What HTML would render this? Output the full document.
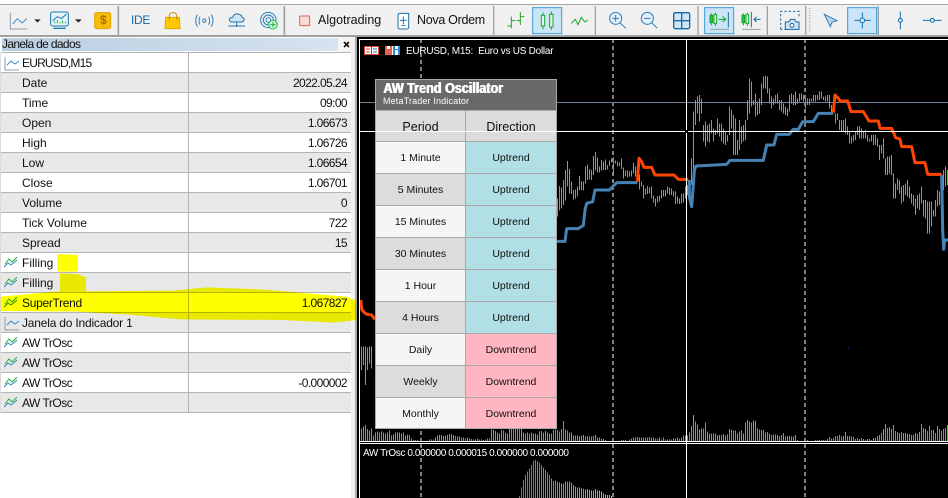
<!DOCTYPE html>
<html><head><meta charset="utf-8"><style>
html,body{margin:0;padding:0}
body{width:948px;height:498px;overflow:hidden;position:relative;background:#fff;font-family:"Liberation Sans",sans-serif;font-size:12px;color:#111}
.a{position:absolute;white-space:nowrap}
.r{position:absolute;left:1px;width:350px;height:19px;line-height:20px;border-bottom:1px solid #b4b4b4}
.r.w{background:#fff}.r.g{background:#e8e8e8}
.r b{font-weight:normal;position:absolute;left:21px;top:0}
.r i{font-style:normal;position:absolute;right:4px;top:0;letter-spacing:-.6px}
.r svg{position:absolute;left:3px;top:4px}
.c{position:absolute;box-sizing:border-box;border-right:1px solid #a9a9a9;border-bottom:1px solid #a9a9a9;text-align:center;font-size:10.5px;line-height:32px;height:32px;color:#111}
.p{left:376px;width:90px}.d{left:466px;width:91px}
.l{background:#f5f5f5}.k{background:#dcdcdc}.u{background:#b0e0e6}.n{background:#ffb6c1}
</style></head><body>

<!-- toolbar -->
<div class="a" style="left:0;top:4px;width:948px;height:1px;background:#a6a6a6"></div>
<div class="a" style="left:0;top:5px;width:948px;height:30px;background:#f0f0f0"></div>
<div class="a" style="left:0;top:35px;width:948px;height:2px;background:#a0a0a0"></div>
<div class="a" style="left:351px;top:37px;width:4px;height:461px;background:#f0f0f0"></div>
<div class="a" style="left:355px;top:37px;width:2px;height:461px;background:#a8a8a8"></div>
<div class="a" style="left:338px;top:37px;width:13px;height:15px;background:#f4f4f4"></div>
<svg class="a" style="left:0;top:0" width="948" height="36" viewBox="0 0 948 36">
<g transform="scale(.33333)" fill="none" stroke-width="3">
 <g stroke="#a0a0a0" stroke-width="5"><path d="M355 18V105M853 18V105"/></g>
 <path d="M31 38V87H82" stroke="#8c9bb0"/><path d="M38 72L52 56L66 69L81 56" stroke="#3a8ac4"/>
 <path d="M103 58H122L112 68Z M225 58H245L235 68Z" fill="#222" stroke="none"/>
 <rect x="152" y="36" width="53" height="42" rx="6" stroke="#1a78b4" fill="#e8f3fa"/>
 <path d="M158 62L172 50L184 56L200 42" stroke="#1a78b4"/>
 <path d="M164 70V64M172 70V60M180 70V66M188 70V62M196 70V66" stroke="#1fb83c"/>
 <path d="M160 85H197" stroke="#1a78b4" stroke-width="4"/>
 <rect x="284" y="38" width="48" height="48" rx="6" fill="#f7bc0a" stroke="#dfa200"/>
 <path d="M497 52H538L540 86H495Z" fill="#ffc800" stroke="#e0a800"/>
 <path d="M508 60V46Q510 38 519 38Q528 38 530 46V60" stroke="#c88e00"/>
 <g stroke="#2a7db8"><circle cx="613" cy="62" r="5"/><path d="M600 50Q594 62 600 74M626 50Q632 62 626 74M592 44Q582 62 592 80M634 44Q644 62 634 80"/></g>
 <path d="M692 66Q682 54 698 52Q702 40 714 42Q726 44 726 52Q738 56 728 66Z" fill="#cfe6f6" stroke="#1f76b0"/>
 <path d="M710 66V78M685 78H735" stroke="#1f76b0"/><circle cx="710" cy="78" r="3" fill="#1f76b0" stroke="none"/>
 <g stroke="#2a7db8"><circle cx="805" cy="60" r="23"/><circle cx="805" cy="60" r="15"/><circle cx="805" cy="60" r="7"/></g>
 <circle cx="819" cy="74" r="13" fill="#d8f8dc" stroke="#16c040"/><path d="M819 66V82M811 74H827" stroke="#16a838"/>
 <rect x="899" y="48" width="30" height="29" rx="2" fill="#fbd9d5" stroke="#d9635a"/>
 <path d="M1194 46Q1194 40 1200 40H1226V80Q1226 87 1220 87H1200Q1194 87 1194 80Z" fill="#fff" stroke="#1a6fa8"/>
 <path d="M1210 50V72M1200 61H1220M1204 76H1216" stroke="#1a6fa8"/>
</g>
<g transform="translate(474,0) scale(.33333)" fill="none" stroke-width="3">
 <g stroke="#a0a0a0" stroke-width="4"><path d="M59 18V105M364 18V105M672 18V105M880 18V105M995 18V105M1213 18V105"/></g>
 <path d="M1007 24V100" stroke="#b4b4b4" stroke-width="5" stroke-dasharray="3 4"/>
 <g stroke="#1aa82c"><path d="M112 50V85M100 78H112M112 62H124M139 36V75M128 62H139M139 50H151"/></g>
 <rect x="176" y="23" width="87" height="78" fill="#cce4f7" stroke="#3a9ad9"/>
 <g stroke="#12a828" fill="#e8f8ea"><path d="M207 38V88M232 34V90"/><rect x="202" y="46" width="10" height="32"/><rect x="227" y="43" width="10" height="38"/></g>
 <path d="M292 70L304 58L312 74L322 52L332 66L342 60" stroke="#18a82a"/>
 <g stroke="#2a7ab8"><circle cx="425" cy="55" r="18" fill="#e4f1fa"/><path d="M438 68L455 85M415 55H435M425 45V65"/>
 <circle cx="520" cy="55" r="18" fill="#e4f1fa"/><path d="M533 68L550 85M510 55H530"/></g>
 <rect x="599" y="38" width="48" height="48" rx="5" fill="#cfe6f7" stroke="#1668a8" stroke-width="4"/><path d="M623 38V86M599 62H647" stroke="#1668a8" stroke-width="4"/>
 <rect x="692" y="23" width="87" height="78" fill="#cce4f7" stroke="#3a9ad9"/>
 <g stroke="#12a828"><path d="M712 40V76M724 38V78"/><rect x="708" y="46" width="8" height="22" fill="#2cc040"/><rect x="720" y="44" width="8" height="26" fill="#e8f8ea"/><path d="M734 58H755M746 50L755 58L746 66"/></g>
 <path d="M763 36V82" stroke="#1a6fa8"/><path d="M708 88H765" stroke="#9aa0a8"/>
 <g stroke="#12a828"><path d="M808 40V76M820 38V78"/><rect x="804" y="46" width="8" height="22" fill="#2cc040"/><rect x="816" y="44" width="8" height="26" fill="#e8f8ea"/></g>
 <path d="M832 36V82M860 58H840M848 50L840 58L848 66" stroke="#1a6fa8"/><path d="M804 88H860" stroke="#9aa0a8"/>
 <path d="M920 88V34H975V52M938 88H920" stroke="#1668a8" stroke-dasharray="7 6"/>
 <path d="M934 66H944L950 58H962L966 66H975V88H934Z" fill="#cfe6f7" stroke="#1668a8"/><circle cx="954" cy="76" r="6" stroke="#1668a8" fill="#fff"/>
 <path d="M1051 43L1089 62L1074 67L1069 80Z" fill="#b8d8f0" stroke="#3a7cb0"/>
 <rect x="1121" y="23" width="87" height="78" fill="#cce4f7" stroke="#3a9ad9"/>
 <path d="M1141 61H1190M1165 37V85" stroke="#1a6fa8"/><circle cx="1165" cy="61" r="7" fill="#cce4f7" stroke="#1a6fa8"/>
 <path d="M1279 35V88" stroke="#1a6fa8"/><circle cx="1279" cy="61" r="6" fill="#cfe6f7" stroke="#1a6fa8"/>
 <path d="M1347 61H1403" stroke="#1a6fa8"/><circle cx="1375" cy="61" r="6" fill="#cfe6f7" stroke="#1a6fa8"/>
</g>
</svg>
<div class="a" style="left:131px;top:13px;color:#1668a8;font-size:12px;line-height:15px;letter-spacing:-.3px">IDE</div>
<div class="a" style="left:100px;top:13px;color:#a66e00;font-size:12px;font-weight:bold;line-height:15px">$</div>
<div class="a" style="left:318px;top:13px;font-size:12.5px;line-height:15px">Algotrading</div>
<div class="a" style="left:417px;top:13px;font-size:12.5px;line-height:15px;letter-spacing:-.3px">Nova Ordem</div>

<!-- left panel -->
<div class="a" style="left:2px;top:38px;width:336px;height:13px;background:linear-gradient(90deg,#b9cee0,#d6e3f0);line-height:13px;font-size:12px;letter-spacing:-.65px">Janela de dados</div>
<svg class="a" style="left:343px;top:41px" width="7" height="7"><path d="M1 1L6 6M6 1L1 6" stroke="#111" stroke-width="1.6"/></svg>
<div class="a" style="left:1px;top:52px;width:350px;height:1px;background:#b4b4b4"></div>

<div class="r w" style="top:53px"><svg width="16" height="14"><path d="M1 0V13H15" fill="none" stroke="#8c9bb0"/><path d="M3 8L7 4L11 7L15 4" fill="none" stroke="#3a8ac4"/></svg><b style="letter-spacing:-.8px">EURUSD,M15</b></div>
<div class="r g" style="top:73px"><b>Date</b><i>2022.05.24</i></div>
<div class="r w" style="top:93px"><b>Time</b><i>09:00</i></div>
<div class="r g" style="top:113px"><b>Open</b><i>1.06673</i></div>
<div class="r w" style="top:133px"><b>High</b><i>1.06726</i></div>
<div class="r g" style="top:153px"><b>Low</b><i>1.06654</i></div>
<div class="r w" style="top:173px"><b>Close</b><i>1.06701</i></div>
<div class="r g" style="top:193px"><b>Volume</b><i>0</i></div>
<div class="r w" style="top:213px"><b>Tick Volume</b><i>722</i></div>
<div class="r g" style="top:233px"><b>Spread</b><i>15</i></div>
<div class="r w" style="top:253px"><svg width="14" height="11"><path d="M0 10L4 6L7 8L13 3" fill="none" stroke="#2a8ab8"/><path d="M1 7L5 2L8 5L13 0" fill="none" stroke="#22b040"/></svg><b>Filling</b></div>
<div class="r g" style="top:273px"><svg width="14" height="11"><path d="M0 10L4 6L7 8L13 3" fill="none" stroke="#2a8ab8"/><path d="M1 7L5 2L8 5L13 0" fill="none" stroke="#22b040"/></svg><b>Filling</b></div>
<div class="r w" style="top:293px"><svg width="14" height="11"><path d="M0 10L4 6L7 8L13 3" fill="none" stroke="#2a8ab8"/><path d="M1 7L5 2L8 5L13 0" fill="none" stroke="#22b040"/></svg><b style="letter-spacing:-.3px">SuperTrend</b><i>1.067827</i></div>
<div class="r g" style="top:313px"><svg width="16" height="14"><path d="M1 0V13H15" fill="none" stroke="#8c9bb0"/><path d="M3 8L7 4L11 7L15 4" fill="none" stroke="#3a8ac4"/></svg><b style="letter-spacing:-.2px">Janela do Indicador 1</b></div>
<div class="r w" style="top:333px"><svg width="14" height="11"><path d="M0 10L4 6L7 8L13 3" fill="none" stroke="#2a8ab8"/><path d="M1 7L5 2L8 5L13 0" fill="none" stroke="#22b040"/></svg><b style="letter-spacing:-.5px">AW TrOsc</b></div>
<div class="r g" style="top:353px"><svg width="14" height="11"><path d="M0 10L4 6L7 8L13 3" fill="none" stroke="#2a8ab8"/><path d="M1 7L5 2L8 5L13 0" fill="none" stroke="#22b040"/></svg><b style="letter-spacing:-.5px">AW TrOsc</b></div>
<div class="r w" style="top:373px"><svg width="14" height="11"><path d="M0 10L4 6L7 8L13 3" fill="none" stroke="#2a8ab8"/><path d="M1 7L5 2L8 5L13 0" fill="none" stroke="#22b040"/></svg><b style="letter-spacing:-.5px">AW TrOsc</b><i>-0.000002</i></div>
<div class="r g" style="top:393px"><svg width="14" height="11"><path d="M0 10L4 6L7 8L13 3" fill="none" stroke="#2a8ab8"/><path d="M1 7L5 2L8 5L13 0" fill="none" stroke="#22b040"/></svg><b style="letter-spacing:-.5px">AW TrOsc</b></div>
<div class="a" style="left:188px;top:53px;width:1px;height:359px;background:#b4b4b4"></div>
<div class="a" style="left:0;top:53px;width:1px;height:360px;background:#dcdcdc"></div>

<!-- chart -->
<svg class="a" style="left:357px;top:37px;background:#000" width="591" height="461" viewBox="357 37 591 461">
 <path d="M421 39V441M613 39V441M805 39V441M421 444V498M613 444V498M805 444V498" stroke="#fff" fill="none" stroke-dasharray="4 3" shape-rendering="crispEdges"/>
 <path d="M360 102.5H948" stroke="#708090" shape-rendering="crispEdges"/>
 <g transform="translate(0,240) scale(.33333)" stroke="#2fdc1f" stroke-width="3" fill="none" shape-rendering="crispEdges">
  <path d="M1085 320V390M1091 320V375M1097 320V435M1103 322V390M1109 320V370M1115 320V385"/>
 </g>
 <g transform="translate(0,240) scale(.33333)" stroke="#ff4500" stroke-width="9" fill="none"><path d="M1082 180L1086 210L1098 222L1115 225L1125 238"/></g>
 <g transform="translate(550,130) scale(.33333)" stroke="#2fdc1f" stroke-width="3" fill="none" shape-rendering="crispEdges">
  <path d="M22 205V260M28 168V242M34 172V235M40 150V225M46 120V212M52 93V170M58 117V190M64 155V192M70 180V208M76 178V205M82 170V200M88 138V180M94 153V180M100 155V182M106 110V160M112 103V150M118 117V148M124 120V150M130 78V135M136 66V122M142 82V128M148 110V128M154 90V122M160 95V120M166 88V120M172 105V118M178 92V108M184 85V98M190 82V135M196 92V100M202 95V110M208 97V108M214 85V117M220 113V145M226 122V138M232 122V142M238 124V140M244 122V140M250 98V130M256 110V140M268 133V178M274 155V170M280 165V205M286 175V195M292 168V192M298 172V190M304 170V205M310 197V218M316 205V230M322 198V218M328 198V215M334 180V205M340 180V200M346 180V200M352 170V190M358 172V195M364 175V195M370 183V200M376 185V222M382 200V220M388 205V222M394 192V220M400 190V218M406 170V205M412 165V195"/>
 </g>
 <g transform="translate(550,70) scale(.33333)" stroke="#2fdc1f" stroke-width="3" fill="none" shape-rendering="crispEdges">
  <path d="M424 265V345M430 125V345M436 90V165M442 80V130M448 75V155M454 85V130M460 165V215M466 155V230M472 165V215M478 160V218M484 150V190M490 175V215M496 180V195M502 145V190M508 160V200M514 160V215M520 175V220M526 185V225M532 195V215M538 110V195M544 120V175M550 135V255M556 145V255M562 210V255M568 150V240M574 170V220M580 165V215M586 150V210M592 90V150M598 25V130M604 35V110M610 90V105M616 70V140M622 95V135M628 85V130M634 40V105M640 20V55M646 18V55M652 20V70M658 55V100M664 80V115M670 85V105M676 75V100M682 70V100M688 90V120M694 90V125M700 100V130M706 110V135M712 115V138M718 75V125M724 70V100M730 75V105M736 65V105M742 85V100M748 70V95M754 70V90M760 75V95M766 85V115M772 85V105M778 85V105M784 85V95M790 75V95M796 75V95M802 75V90M808 65V90M814 65V85M820 80V90M826 80V95M832 75V95M838 75V115M844 105V130M856 130V160M862 130V150M868 150V180M874 150V185M880 150V185M886 145V190M892 170V195M898 185V220M904 200V220M910 195V215M916 185V210M922 170V195M928 168V205M934 175V205M940 185V205M946 180V205M952 195V215M958 205V215M964 195V215M970 195V225M976 195V225M982 205V230M988 225V270M994 225V250M1000 205V265M1006 265V315M1012 260V315M1018 260V310M1024 255V315M1030 310V385M1036 340V385M1042 325V360M1048 330V370M1054 350V400M1060 345V395M1066 340V375M1072 330V380M1078 350V385M1084 370V400M1090 375V410M1096 385V435M1102 375V415M1108 370V420M1114 350V400M1120 390V440M1126 390V445M1132 395V490M1138 395V490M1144 395V470M1150 420V440M1156 390V440M1162 360V410M1168 365V405M1180 300V360M1186 290V350M1192 300V345"/>
 </g>
 <g transform="translate(550,70) scale(.33333)" fill="none" stroke-width="9" stroke-linejoin="round">
  <path stroke="#4682b4" d="M20 514H45L50 476H85L100 466L105 420L110 400L128 395L135 360H178L200 338H262"/>
  <path stroke="#4682b4" d="M418 330V380L425 410L430 345L433 300L438 288L530 283L540 271H640L650 225H672L680 193H718L730 178H745L758 155H790L805 130H850"/>
  <path stroke="#4682b4" d="M1175 315L1178 480L1181 538L1184 510H1194"/>
  <path stroke="#ff4500" d="M262 335L267 265L275 275L282 292H305L315 315H372L385 328H415"/>
  <path stroke="#ff4500" d="M850 128L855 75L865 85L870 93H893L903 125H940L957 153H985L990 175H1025L1037 203L1050 207L1055 230H1085L1095 278H1125L1133 313H1175"/>
 </g>
 <g transform="translate(356,400) scale(.33333)" stroke="#4fc23a" stroke-width="3" fill="none" shape-rendering="crispEdges">
  <path d="M16 85V123M22 80V123M28 75V123M34 87V123M40 92V123M46 85V123M52 107V123M58 97V123M64 95V123M70 97V123M76 95V123M82 98V123M88 100V123M94 97V123M100 92V123M106 107V123M112 103V123M118 97V123M124 97V123M130 98V123M136 100V123M142 97V123M148 107V123M154 103V123M160 105V123M166 115V123M172 120V123M178 120V123M184 120V123M220 118V123M226 118V123M232 118V123M238 113V123M244 107V123M250 105V123M256 105V123M262 108V123M268 107V123M274 105V123M280 102V123M286 102V123M292 105V123M298 108V123M304 110V123M310 110V123M316 112V123M322 112V123M328 115V123M334 113V123M340 115V123M346 117V123M352 118V123M358 118V123M364 116V123M370 118V123M376 118V123M382 120V123M388 118V123M394 116V123M400 115V123M406 88V123M412 90V123M418 93V123M424 97V123M430 100V123M436 90V123M442 92V123M448 98V123M454 100V123M460 85V123M466 85V123M472 85V123M478 85V123M484 85V123M490 85V123M496 85V123M502 97V123M508 100V123M514 98V123M520 100V123M526 98V123M532 100V123M538 100V123M544 103V123M550 95V123M556 93V123M562 97V123M568 93V123M574 97V123M580 100V123M586 100V123M592 88V123M598 88V123M604 90V123M610 95V123M616 87V123M622 63V123M628 88V123M634 92V123M640 97V123M646 98V123M652 107V123M658 107V123M664 107V123M670 108V123M676 107V123M682 105V123M688 110V123M694 108V123M700 110V123M706 110V123M712 108V123M718 105V123M724 112V123M730 113V123M736 117V123M742 117V123M748 120V123M796 120V123M802 120V123M808 120V123M820 118V123M826 116V123M832 113V123M838 112V123M844 111V123M850 113V123M856 113V123M862 113V123M868 113V123M874 113V123M880 111V123M886 113V123M892 113V123M898 115V123M904 115V123M910 113V123M916 118V123M922 113V123M928 118V123M934 118V123M940 118V123M946 118V123M952 115V123M958 115V123M964 113V123M970 115V123M976 112V123M982 107V123M988 107V123M994 107V123M1000 97V123M1006 78V123M1012 45V123M1018 65V123M1024 73V123M1030 88V123M1036 85V123M1042 85V123M1048 68V123M1054 95V123M1060 100V123M1066 100V123M1072 100V123M1078 100V123M1084 105V123M1090 105V123M1096 105V123M1102 102V123M1108 107V123M1114 103V123M1120 87V123M1126 90V123M1132 92V123M1138 92V123M1144 100V123M1150 95V123M1156 92V123M1162 100V123M1168 67V123M1174 60V123M1180 65V123M1186 67V123M1192 62V123"/>
 </g>
 <g transform="translate(700.33,400) scale(.33333)" stroke="#4fc23a" stroke-width="3" fill="none" shape-rendering="crispEdges">
  <path d="M165 63V123M171 85V123M177 88V123M183 90V123M189 90V123M195 98V123M201 96V123M207 100V123M213 105V123M219 103V123M225 104V123M231 105V123M237 108V123M243 105V123M249 99V123M255 110V123M261 108V123M267 108V123M273 110V123M279 110V123M285 105V123M291 120V123M321 120V123M345 120V123M351 120V123M357 120V123M363 120V123M369 120V123M375 120V123M381 117V123M387 111V123M393 116V123M399 114V123M405 108V123M411 108V123M417 105V123M423 110V123M429 108V123M435 96V123M441 108V123M447 108V123M453 110V123M459 111V123M465 117V123M471 114V123M477 117V123M483 114V123M489 117V123M495 120V123M501 117V123M507 117V123M513 120V123M519 114V123M525 114V123M531 108V123M537 105V123M543 99V123M549 87V123M555 72V123M561 84V123M567 81V123M573 87V123M579 75V123M585 93V123M591 96V123M597 99V123M603 96V123M609 99V123M615 99V123M621 102V123M627 102V123M633 105V123M639 105V123M645 99V123M651 102V123M657 96V123M663 72V123M669 84V123M675 87V123M681 93V123M687 78V123M693 90V123M699 90V123M705 99V123M711 78V123M717 87V123M723 93V123M729 87V123M735 84V123M741 75V123"/>
 </g>
 <defs><linearGradient id="h" gradientUnits="userSpaceOnUse" x1="490" x2="770" y1="0" y2="0"><stop offset="0" stop-color="#4682b4"/><stop offset="1" stop-color="#4fd8d8"/></linearGradient></defs>
 <g transform="translate(356,400) scale(.33333)" stroke="url(#h)" stroke-width="3" fill="none" shape-rendering="crispEdges">
  <path d="M490 288V294M496 262V294M502 240V294M508 225V294M514 215V294M520 205V294M526 195V294M532 183V294M538 180V294M544 183V294M550 187V294M556 195V294M562 203V294M568 210V294M574 218V294M580 225V294M586 235V294M592 243V294M598 242V294M604 245V294M610 248V294M616 250V294M622 250V294M628 245V294M634 245V294M640 245V294M646 248V294M652 255V294M658 260V294M664 262V294M670 263V294M676 265V294M682 267V294M688 268V294M694 267V294M700 270V294M706 272V294M712 272V294M718 267V294M724 272V294M730 272V294M736 275V294M742 280V294M748 283V294M754 285V294M760 285V294M766 288V294"/>
 </g>
 <path d="M848 348h1" stroke="#2040d0" shape-rendering="crispEdges"/>
 <path d="M359 39.5H948M359.5 39V498M359 441.5H948M359 443.5H948" stroke="#fff" fill="none" shape-rendering="crispEdges"/>
 <!-- title icons -->
 <g shape-rendering="crispEdges">
  <rect x="364.5" y="46.5" width="14" height="8" fill="#fff" stroke="#e04030"/><path d="M371.5 46V55" stroke="#1a6fa8"/><path d="M366 49H370M366 52H370" stroke="#e04030"/><path d="M373 49H377M373 52H377" stroke="#1a6fa8"/>
  <rect x="385" y="46" width="7" height="9" fill="#e8604c"/><rect x="393" y="46" width="7" height="9" fill="#2a8ad0"/><rect x="387" y="46" width="3" height="3" fill="#fff"/><rect x="395" y="46" width="3" height="3" fill="#fff"/><rect x="392" y="46" width="1" height="9" fill="#fff"/><rect x="395" y="50" width="3" height="5" fill="#fff"/>
 </g>
</svg>
<div class="a" style="left:406px;top:45px;color:#fff;font-size:10px;line-height:13px;z-index:3;letter-spacing:-.25px">EURUSD, M15:&nbsp; Euro vs US Dollar</div>
<div class="a" style="left:363px;top:447px;color:#fff;font-size:10px;line-height:13px;z-index:3;letter-spacing:-.4px">AW TrOsc 0.000000 0.000015 0.000000 0.000000</div>

<!-- table -->
<div class="a" style="left:375px;top:79px;width:182px;height:350px;box-sizing:border-box;border:1px solid #a9a9a9;background:#dcdcdc;z-index:2"></div>
<div class="a" style="left:376px;top:80px;width:180px;height:30px;background:#696969;z-index:2"></div>
<div class="a" style="left:383px;top:80px;color:#fff;font-weight:bold;font-size:15px;line-height:18px;z-index:2;transform:scaleX(.84);transform-origin:left;text-shadow:1px 0 0 #fff">AW Trend Oscillator</div>
<div class="a" style="left:383px;top:96px;color:#fff;font-size:9px;line-height:11px;z-index:2;letter-spacing:.15px">MetaTrader Indicator</div>
<div style="position:absolute;left:0;top:0;z-index:2">
<div class="c p k" style="top:110px;height:32px;font-size:12.5px;line-height:32px;border-top:1px solid #a9a9a9">Period</div>
<div class="c d k" style="top:110px;height:32px;font-size:12.5px;line-height:32px;border-top:1px solid #a9a9a9">Direction</div>
<div class="c p l" style="top:142px">1 Minute</div><div class="c d u" style="top:142px">Uptrend</div>
<div class="c p k" style="top:174px">5 Minutes</div><div class="c d u" style="top:174px">Uptrend</div>
<div class="c p l" style="top:206px">15 Minutes</div><div class="c d u" style="top:206px">Uptrend</div>
<div class="c p k" style="top:238px">30 Minutes</div><div class="c d u" style="top:238px">Uptrend</div>
<div class="c p l" style="top:270px">1 Hour</div><div class="c d u" style="top:270px">Uptrend</div>
<div class="c p k" style="top:302px">4 Hours</div><div class="c d u" style="top:302px">Uptrend</div>
<div class="c p l" style="top:334px">Daily</div><div class="c d n" style="top:334px">Downtrend</div>
<div class="c p k" style="top:366px">Weekly</div><div class="c d n" style="top:366px">Downtrend</div>
<div class="c p l" style="top:398px;height:31px">Monthly</div><div class="c d n" style="top:398px;height:31px">Downtrend</div>
</div>

<!-- crosshair overlay -->
<svg class="a" style="left:0;top:0;z-index:4;pointer-events:none" width="948" height="498">
 <path d="M360 131.5H948M686.5 39V498" stroke="#fff" fill="none" shape-rendering="crispEdges"/>
 <rect x="685" y="130" width="3" height="3" fill="#000"/>
</svg>
<!-- yellow highlighter -->
<svg class="a" style="left:0;top:0;z-index:5;mix-blend-mode:multiply;pointer-events:none" width="948" height="498">
 <g transform="translate(0,240) scale(.33333)" fill="#ffff00">
  <path d="M172 42L234 45V95H172Z"/>
  <path d="M180 100L232 102L258 112V155H180Z"/>
  <path d="M165 155L520 152L620 142L780 148L900 158L1040 170L1065 180L1070 240L1000 248L850 240L540 238L400 225L230 215L2 213V170Z"/>
 </g>
</svg>
</body></html>
